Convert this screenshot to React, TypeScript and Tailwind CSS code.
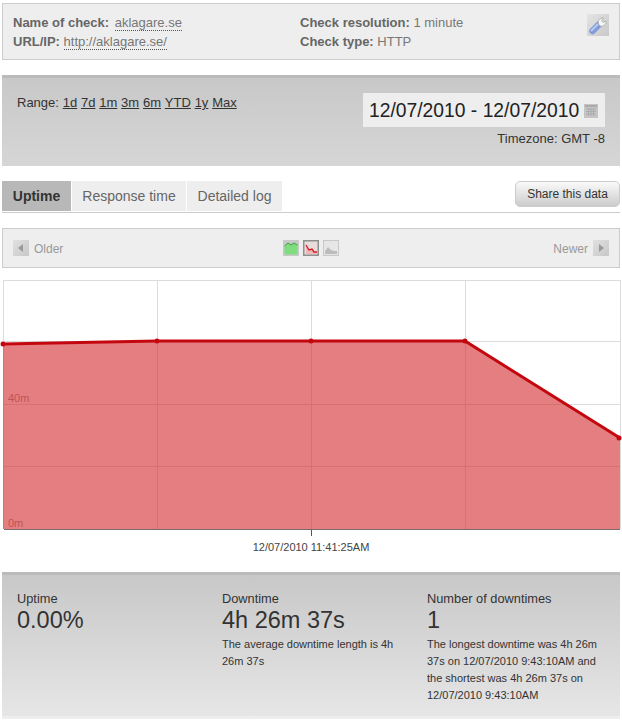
const ranges = ["1d", "7d", "1m", "3m", "6m", "YTD", "1y", "Max"]

function WrenchIcon() {
  return (
    <svg width="22" height="22" viewBox="0 0 22 22" className="block">
      <defs>
        <linearGradient id="wrench-bg" x1="0" y1="0" x2="1" y2="1">
          <stop offset="0" stopColor="#e4e4e4" />
          <stop offset="1" stopColor="#c8c8c8" />
        </linearGradient>
      </defs>
      <rect width="22" height="22" fill="url(#wrench-bg)" />
      <path d="M5.5 17 L12 10.5" stroke="#7f9bd8" strokeWidth="6.5" strokeLinecap="round" />
      <path d="M4.5 16.5 L10.5 10.5" stroke="#b7caf0" strokeWidth="2" strokeLinecap="round" />
      <path d="M11.5 10 C10.5 6.5 13 3.5 16.5 4 L14.5 6.5 L16 8.5 L19 7 C19.5 10.5 16 13 13 12 Z" fill="#f6f6f6" stroke="#a0a0a0" strokeWidth="0.7" />
    </svg>
  )
}

function ArrowButton({ dir }: { dir: "left" | "right" }) {
  return (
    <svg width="16" height="16" viewBox="0 0 16 16" className="block">
      <defs>
        <linearGradient id={"arrow-" + dir} x1="0" y1="0" x2="1" y2="1">
          <stop offset="0" stopColor="#e0e0e0" />
          <stop offset="1" stopColor="#c8c8c8" />
        </linearGradient>
      </defs>
      <rect width="16" height="16" fill={"url(#arrow-" + dir + ")"} />
      <path d={dir === "left" ? "M10 4 V12 L5 8 Z" : "M6 4 V12 L11 8 Z"} fill="#9a9a9a" />
    </svg>
  )
}

function ChartTypeIcon({ kind }: { kind: "green" | "red" | "gray" }) {
  return (
    <svg width="16" height="16" viewBox="0 0 16 16" className="block">
      {kind === "green" && (
        <>
          <rect width="16" height="16" fill="#c8c8c8" />
          <path d="M1.5 6 L5 3 L8 5 L11 3 L14.5 5 V14.5 H1.5 Z" fill="#7fdc7f" />
          <path d="M1.5 6 L5 3 L8 5 L11 3 L14.5 5" fill="none" stroke="#3f9f3f" />
        </>
      )}
      {kind === "red" && (
        <>
          <rect x="0.75" y="0.75" width="14.5" height="14.5" fill="#e8dcdc" stroke="#8f8f8f" strokeWidth="1.5" />
          <path d="M3 5 L6 10 L9 9 L11 12 L14 12 V14 H3 Z" fill="#f0b8b8" />
          <path d="M3 5 L6 10 L9 9 L11 12 L14 12" fill="none" stroke="#d0202a" strokeWidth="1.4" />
        </>
      )}
      {kind === "gray" && (
        <>
          <rect x="0.5" y="0.5" width="15" height="15" fill="#e6e6e6" stroke="#c8c8c8" />
          <path d="M2 11 L5 7 L8 10 L11 11 L14 11 V14 H2 Z" fill="#bcbcbc" />
        </>
      )}
    </svg>
  )
}

function CalendarIcon() {
  return (
    <svg width="14" height="14" viewBox="0 0 14 14" className="block">
      <rect width="14" height="14" fill="#c4c4c4" />
      <rect x="1" y="1" width="12" height="2" fill="#aaaaaa" />
      <path d="M2 5 H12 M2 7.5 H12 M2 10 H12 M4.5 4 V12 M7 4 V12 M9.5 4 V12" stroke="#a8a8a8" strokeWidth="0.8" />
    </svg>
  )
}

function UptimeChart() {
  return (
    <svg width="622" height="282" viewBox="0 0 622 282" className="block">
      <path
        d="M3 1.5 H620 M3 62.5 H620 M3 125.5 H620 M3 187.5 H620 M3.5 1 V250 M157.5 1 V250 M311.5 1 V250 M465.5 1 V250 M620.5 1 V250"
        stroke="#dcdcdc"
      />
      <text x="8" y="123" fontSize="11" fill="#999" fontFamily="Liberation Sans, sans-serif">40m</text>
      <text x="8" y="248" fontSize="11" fill="#999" fontFamily="Liberation Sans, sans-serif">0m</text>
      <path d="M3 65 L157 62 L311 62 L465 62 L620 159 V250 H3 Z" fill="#d4282b" fillOpacity="0.6" />
      <path d="M3 65 L157 62 L311 62 L465 62 L620 159" fill="none" stroke="#c4070f" strokeWidth="3" />
      <circle cx="3" cy="65" r="2.5" fill="#c4070f" />
      <circle cx="157" cy="62" r="2.5" fill="#c4070f" />
      <circle cx="311" cy="62" r="2.5" fill="#c4070f" />
      <circle cx="465" cy="62" r="2.5" fill="#c4070f" />
      <circle cx="619" cy="159" r="2.5" fill="#c4070f" />
      <path d="M4 250.5 H620" stroke="#7a6a6c" />
      <path d="M311.5 251 V257" stroke="#555" />
      <text x="311" y="272" textAnchor="middle" fontSize="11" fill="#444" fontFamily="Liberation Sans, sans-serif">12/07/2010 11:41:25AM</text>
    </svg>
  )
}

export default function App() {
  return (
    <div className="w-[622px] h-[720px] overflow-hidden bg-white pt-[3px] font-['Liberation_Sans',Arial,sans-serif] text-[#444]">
      {/* check info */}
      <div className="mx-[2px] h-[57px] border border-[#cccccc] bg-[#eeeeee] flex pl-[10px] pr-[10px] pt-[9px] text-[13px] leading-[19px] text-[#777]">
        <div className="w-[287px]">
          <div>
            <b className="text-[#666]">Name of check:</b>{" "}
            <span className="ml-[2px] border-b border-dotted border-[#555]">aklagare.se</span>
          </div>
          <div>
            <b className="text-[#666]">URL/IP:</b> <span className="border-b border-dotted border-[#555]">http://aklagare.se/</span>
          </div>
        </div>
        <div className="flex-1">
          <div>
            <b className="text-[#666]">Check resolution:</b> 1 minute
          </div>
          <div>
            <b className="text-[#666]">Check type:</b> HTTP
          </div>
        </div>
        <div className="mt-[1px]">
          <WrenchIcon />
        </div>
      </div>

      {/* date range */}
      <div className="mx-[2px] mt-[15px] h-[91px] border-t-[3px] border-[#bbbbbb] bg-gradient-to-b from-[#c8c8c8] to-[#d6d6d6] flex justify-between pl-[15px] pr-[15px] pt-[15px]">
        <div className="flex text-[13px] leading-[20px] text-[#333]">
          <span className="mr-[3.8px]">Range:</span>
          {ranges.map((r) => (
            <a key={r} className="underline mr-[3.8px]">
              {r}
            </a>
          ))}
        </div>
        <div className="flex flex-col items-end">
          <div className="h-[34px] w-[242px] bg-[#eeeeee] flex items-center pl-[6px] pt-[2px] text-[19.3px] text-[#222] gap-[5px]">
            <span className="whitespace-nowrap">12/07/2010 - 12/07/2010</span>
            <CalendarIcon />
          </div>
          <div className="mt-[4px] text-[13px] leading-[16px] text-[#333]">Timezone: GMT -8</div>
        </div>
      </div>

      {/* tabs */}
      <div className="mx-[2px] mt-[15px] h-[32px] border-b border-[#cccccc] flex justify-between">
        <div className="flex text-[14px] h-[30px]">
          <div className="w-[69px] bg-[#b8b8b8] flex items-center justify-center font-bold text-[#333]">Uptime</div>
          <div className="ml-[1px] w-[114px] bg-[#eeeeee] flex items-center justify-center text-[#666]">Response time</div>
          <div className="ml-[1px] w-[95px] bg-[#eeeeee] flex items-center justify-center text-[#666]">Detailed log</div>
        </div>
        <div className="h-[26px] w-[105px] border border-[#cccccc] rounded-[5px] bg-gradient-to-b from-[#fafafa] to-[#cccccc] flex items-center justify-center text-[12px] text-[#333]">
          Share this data
        </div>
      </div>

      {/* toolbar */}
      <div className="mx-[2px] mt-[15px] h-[40px] border border-[#cccccc] bg-[#eeeeee] flex items-center justify-between pl-[10px] pr-[10px] text-[12px] leading-[18px] text-[#999]">
        <div className="w-[100px] flex items-center gap-[5px]">
          <ArrowButton dir="left" />
          <span className="pt-[1px]">Older</span>
        </div>
        <div className="flex gap-[4px]">
          <ChartTypeIcon kind="green" />
          <ChartTypeIcon kind="red" />
          <ChartTypeIcon kind="gray" />
        </div>
        <div className="w-[100px] flex items-center justify-end gap-[5px]">
          <span className="pt-[1px]">Newer</span>
          <ArrowButton dir="right" />
        </div>
      </div>

      <div className="mt-[11px]">
        <UptimeChart />
      </div>

      {/* stats */}
      <div className="mx-[2px] mt-[11px] h-[144px] border-t-[3px] border-[#bbbbbb] bg-gradient-to-b from-[#c8c8c8] to-[#e6e6e6] grid grid-cols-[205px_205px_1fr] pl-[15px] pt-[16px] text-[#333]">
        <div>
          <div className="text-[12.8px] leading-[16px]">Uptime</div>
          <div className="pt-[1px] text-[23.5px] leading-[25px]">0.00%</div>
        </div>
        <div className="pr-[30px]">
          <div className="text-[12.8px] leading-[16px]">Downtime</div>
          <div className="pt-[1px] text-[23.5px] leading-[25px]">4h 26m 37s</div>
          <div className="mt-[3px] text-[11px] leading-[17px]">The average downtime length is 4h 26m 37s</div>
        </div>
        <div className="pr-[20px]">
          <div className="text-[12.8px] leading-[16px]">Number of downtimes</div>
          <div className="pt-[1px] text-[23.5px] leading-[25px]">1</div>
          <div className="mt-[3px] text-[11px] leading-[17px]">
            The longest downtime was 4h 26m 37s on 12/07/2010 9:43:10AM and the shortest was 4h 26m 37s on 12/07/2010 9:43:10AM
          </div>
        </div>
      </div>
      <div className="mx-[2px] h-[3px] bg-[#eeeeee]" />
    </div>
  )
}
